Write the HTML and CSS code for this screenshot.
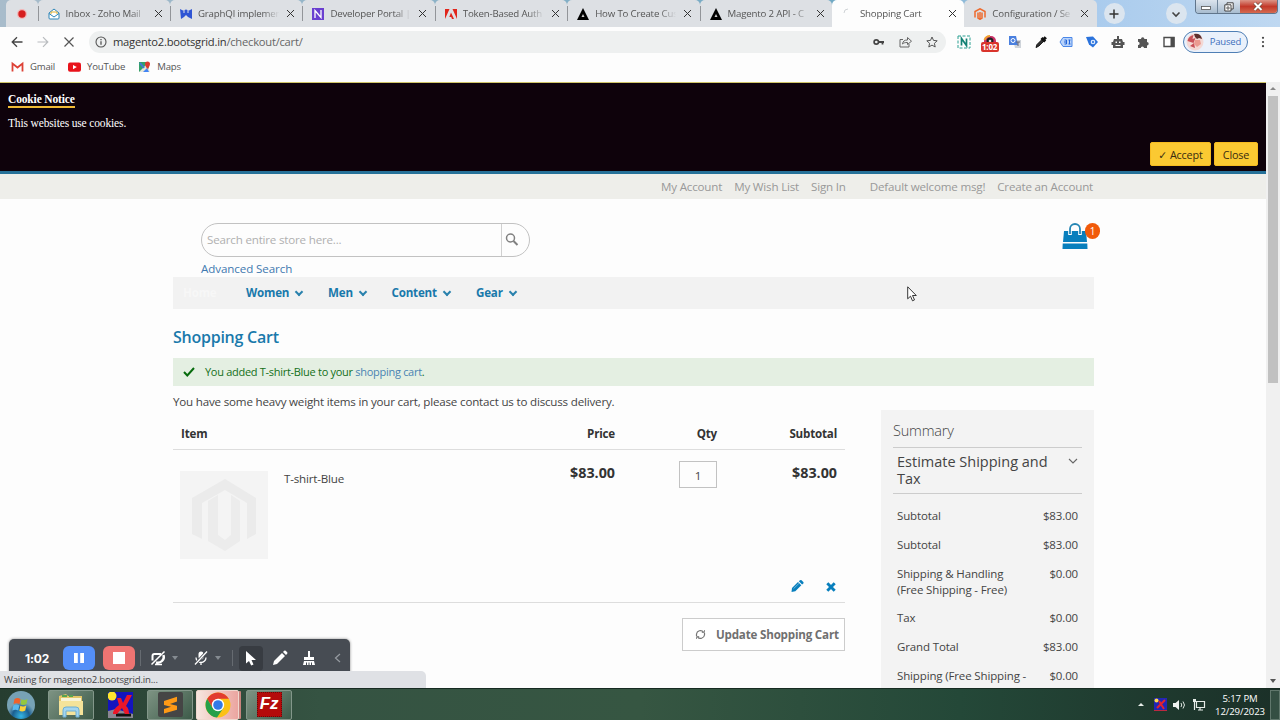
FILE: index.html
```html
<!DOCTYPE html>
<html lang="en">
<head>
    <meta charset="UTF-8">
    <title>Shopping Cart</title>
    <link rel="stylesheet" href="styles.css">
</head>
<body>
    <!-- Browser tabs -->
    <div class="tab-strip">
        <div class="tab pinned"><svg class="fav" viewBox="0 0 12 12"><circle cx="6" cy="6" r="5" fill="#f3b5b5"/><circle cx="6" cy="6" r="3.7" fill="#d61f1f"/></svg></div>
        <div class="tab">
            <svg class="fav" viewBox="0 0 12 12"><path d="M1 5l5-4 5 4v5a1 1 0 0 1-1 1H2a1 1 0 0 1-1-1z" fill="#fff" stroke="#2f86b8"/><path d="M3 6V4h6v2" fill="none" stroke="#e0b030"/><path d="M1 5.5l5 3.5 5-3.500" fill="none" stroke="#2f86b8"/></svg>
            <span class="tab-title">Inbox - Zoho Mail</span><span class="tab-close"></span>
        </div>
        <div class="tab">
            <svg class="fav" viewBox="0 0 12 12"><path d="M0 1l3 1.500 3-1 3 1 3-1.500v10L8 9 6 7 4 9l-3 2z" fill="#2f55d4"/><path d="M4 2v3M8 2v3M6 8v3" stroke="#dfe3e8"/></svg>
            <span class="tab-title">GraphQl implemen</span><span class="tab-close"></span>
        </div>
        <div class="tab">
            <svg class="fav" viewBox="0 0 12 12"><rect width="12" height="12" fill="#6a3fd0"/><path d="M3 10V2.500l6 7V2" fill="none" stroke="#fff" stroke-width="1.300"/></svg>
            <span class="tab-title">Developer Portal |</span><span class="tab-close"></span>
        </div>
        <div class="tab">
            <svg class="fav" viewBox="0 0 12 12"><path d="M0 1h4.500L0 11zM7.500 1H12v10zM6 4.500L9 11H7L6.200 9H4.300z" fill="#e1251b"/></svg>
            <span class="tab-title">Token-Based Auth</span><span class="tab-close"></span>
        </div>
        <div class="tab">
            <svg class="fav" viewBox="0 0 12 12"><path d="M6 0l6 12H0z" fill="#000"/><path d="M6 6l1.500 3h-3z" fill="#ccc"/></svg>
            <span class="tab-title">How To Create Cus</span><span class="tab-close"></span>
        </div>
        <div class="tab">
            <svg class="fav" viewBox="0 0 12 12"><path d="M6 0l6 12H0z" fill="#000"/><path d="M6 6l1.500 3h-3z" fill="#ccc"/></svg>
            <span class="tab-title">Magento 2 API - C</span><span class="tab-close"></span>
        </div>
        <div class="tab active">
            <svg class="fav" viewBox="0 0 12 12"><path d="M2 5a4 4 0 0 1 4-4" fill="none" stroke="#cfd3d6"/></svg>
            <span class="tab-title">Shopping Cart</span><span class="tab-close"></span>
        </div>
        <div class="tab last">
            <svg class="fav" viewBox="0 0 12 12"><path d="M1 9.500V3.500L6 .8l5 2.700v6M4 4.500V10l2 1.300L8 10V4.500M6 4v7" fill="none" stroke="#ee6a2c" stroke-width="1.500"/></svg>
            <span class="tab-title">Configuration / Se</span><span class="tab-close"></span>
        </div>
        <span class="strip-button"><svg width="12" height="12" viewBox="0 0 12 12"><path d="M6 1.500v9M1.500 6h9" stroke="#333" stroke-width="1.500"/></svg></span>
        <span class="strip-button search-tabs"><svg width="12" height="12" viewBox="0 0 12 12"><path d="M2.500 4.500L6 8l3.500-3.500" fill="none" stroke="#444" stroke-width="1.600"/></svg></span>
        <div class="window-buttons">
            <span class="win-min"><svg width="10" height="9" viewBox="0 0 10 9"><rect x=".5" y="4.500" width="9" height="3" fill="#fff" stroke="#555" stroke-width=".8"/></svg></span>
            <span class="win-max"><svg width="10" height="10" viewBox="0 0 10 10"><path d="M3 .8h6.200V7H3z" fill="#fff" stroke="#444"/><path d="M.8 2.800H7V9H.8z" fill="#fff" stroke="#444"/><path d="M3 5h2v2H3z" fill="none" stroke="#444" stroke-width=".8"/></svg></span>
            <span class="win-close"><svg width="10" height="9" viewBox="0 0 10 9"><path d="M1.500 1l7 7M8.500 1l-7 7" stroke="#643" stroke-width="3.200"/><path d="M1.500 1l7 7M8.500 1l-7 7" stroke="#fff" stroke-width="2.100"/></svg></span>
        </div>
    </div>

    <!-- Address bar and extensions -->
    <div class="toolbar">
        <svg class="nav-icon" viewBox="0 0 12 12"><path d="M11.500 6H1.300M6 1.200L1.200 6 6 10.800" fill="none" stroke="#444" stroke-width="1.300"/></svg>
        <svg class="nav-icon" viewBox="0 0 12 12"><path d="M.5 6h10.200M6 1.200L10.800 6 6 10.800" fill="none" stroke="#b9bcbf" stroke-width="1.200"/></svg>
        <svg class="nav-icon" viewBox="0 0 12 12"><path d="M1.500 1.500l9 9M10.500 1.500l-9 9" stroke="#555" stroke-width="1.200"/></svg>
        <div class="address">
            <svg width="12" height="12" viewBox="0 0 12 12"><circle cx="6" cy="6" r="5" fill="none" stroke="#555" stroke-width="1.100"/><path d="M6 5.200v3.600M6 3v1.200" stroke="#555" stroke-width="1.300"/></svg>
            <span class="url">magento2.bootsgrid.in<span>/checkout/cart/</span></span>
            <svg width="12" height="12" viewBox="0 0 12 12"><circle cx="3.300" cy="6" r="2.200" fill="none" stroke="#444" stroke-width="1.700"/><path d="M5.500 6H11M9.500 6v2.500" stroke="#444" stroke-width="1.800"/></svg>
            <svg width="13" height="12" viewBox="0 0 13 12"><path d="M4 3.500H1v7.500h9V8M3.500 8c.5-3 2-4 5-4V1.500l4 3.700-4 3.300V6.500c-2.500 0-3.800.3-5 1.500z" fill="none" stroke="#666"/></svg>
            <svg width="12" height="12" viewBox="0 0 12 12"><path d="M6 1l1.500 3.400 3.700.4-2.800 2.500.8 3.700L6 9.100 2.800 11l.8-3.700L.8 4.800l3.700-.4z" fill="none" stroke="#555"/></svg>
        </div>
        <div class="extensions">
            <svg viewBox="0 0 14 14"><rect x="1" y="1" width="12" height="12" fill="none" stroke="#2aa092" stroke-dasharray="3 1.500"/><path d="M4.500 10.500v-7l5 7v-7" fill="none" stroke="#128073" stroke-width="1.700"/></svg>
            <span class="rec-ext"><svg viewBox="0 0 14 14"><path d="M1 11V6a5 5 0 0 1 5-5h2a5 5 0 0 1 5 5v5z" fill="#cb3268"/><path d="M1.500 5Q3 1 7 1" fill="none" stroke="#f0a030" stroke-width="2"/><circle cx="7" cy="6" r="3.500" fill="#222"/><circle cx="7" cy="6" r="1.300" fill="#ddd"/></svg><span class="rec-time">1:02</span></span>
            <svg viewBox="0 0 14 14"><path d="M5 5h8v8H7z" fill="#cfd4da"/><path d="M1 1h7l2 9H1z" fill="#4a80df"/><circle cx="5" cy="5.500" r="2" fill="none" stroke="#fff"/><path d="M8 7h4M10 7v4" stroke="#667"/></svg>
            <svg viewBox="0 0 14 14"><path d="M2 12.500l1-3 5-5 1.700 1.700-5 5z" fill="#333" stroke="#111"/><path d="M7.500 3l3.700 3.500M9.500 4.800l2.300-2.600" stroke="#111" stroke-width="3"/></svg>
            <svg viewBox="0 0 14 14"><path d="M1 7l3-4.500h9v9H4z" fill="#b9d3fa" stroke="#4a87e8"/><path d="M5.500 5h2v4h-2M9.500 5h2M9.500 9h2M10.500 5v4M5 7h3" fill="none" stroke="#2264d8"/></svg>
            <svg viewBox="0 0 14 14"><path d="M1 2l7-.5L13 7l-5 5.500-4-3z" fill="#2b73dc"/><circle cx="8" cy="7" r="2.300" fill="#e8f1ff"/><path d="M8 5.600L9.300 7 8 8.400 6.700 7z" fill="#2b73dc"/></svg>
            <svg viewBox="0 0 14 14"><path d="M3 4h8l1 3h1.500v3H12v3H2v-3H.5V7H2z" fill="#555"/><path d="M7 1v3" stroke="#555" stroke-width="2"/><path d="M4.500 6.500h1.500v1.500H4.500zM8 6.500h1.500v1.500H8zM4.500 10h5v1h-5z" fill="#fff"/></svg>
            <svg viewBox="0 0 14 14"><path d="M2 4h3a1.700 1.700 0 1 1 3.400 0H11v3a1.700 1.700 0 1 1 0 3.400V13H8a1.600 1.600 0 0 0-3.200 0H2v-3a1.600 1.600 0 0 0 0-3.200z" fill="#555"/></svg>
            <svg viewBox="0 0 14 14"><path d="M2 2.500h10v9H2z" fill="#fff" stroke="#4c4c4c" stroke-width="1.400"/><path d="M8.500 2h4v10h-4z" fill="#4c4c4c"/></svg>
        </div>
        <div class="profile">
            <svg width="18" height="18" viewBox="0 0 18 18"><circle cx="9" cy="9" r="8.500" fill="#f3d8d4"/><path d="M1.500 8q1-5 6-6l-1 4 3-1-2 5-3-1zM4 13l4-3 1 5z" fill="#c95058"/><path d="M8 1q7-1 8 5l-3-1-2 1-2-2z" fill="#5e302e"/><path d="M9 7l5 0 1 4-4 3-3-3z" fill="#eb9a90"/></svg>
            <span>Paused</span>
        </div>
        <svg width="4" height="12" viewBox="0 0 4 12"><circle cx="2" cy="1.800" r="1.100" fill="#444"/><circle cx="2" cy="6" r="1.100" fill="#444"/><circle cx="2" cy="10.200" r="1.100" fill="#444"/></svg>
    </div>

    <!-- Bookmarks -->
    <div class="bookmarks">
        <span class="bookmark"><svg viewBox="0 0 13 12"><path d="M1.500 10.500V2.500l5 4 5-4v8" fill="none" stroke="#dd4136" stroke-width="1.800"/></svg>Gmail</span>
        <span class="bookmark"><svg viewBox="0 0 13 12"><rect y="1.500" width="13" height="9.200" rx="2" fill="#e8121a"/><path d="M5 4l3.800 2.100L5 8.200z" fill="#fff"/></svg>YouTube</span>
        <span class="bookmark"><svg viewBox="0 0 13 12"><path d="M1 1h10v10H1z" fill="#34a06a"/><path d="M1 11l8-8 3 8z" fill="#e7e6d8"/><path d="M5 11l4-4 2 4z" fill="#4285f4"/><path d="M2 2l4 5" stroke="#4279d8" stroke-width="2"/><path d="M7 3a2.500 2.500 0 0 1 5 0c0 2-2.500 5-2.500 5S7 5 7 3z" fill="#dc3a30"/></svg>Maps</span>
    </div>

    <div class="viewport">
        <div class="page">
            <div class="cookie-notice">
                <div class="cookie-text">
                    <h2>Cookie Notice</h2>
                    <p>This websites use cookies.</p>
                </div>
                <div class="cookie-actions">
                    <button class="accept" type="button">✓ Accept</button>
                    <button type="button">Close</button>
                </div>
            </div>

            <div class="header-panel">
                <a>My Account</a><a>My Wish List</a><a class="sign-in">Sign In</a><span>Default welcome msg!</span><a>Create an Account</a>
            </div>

            <div class="container">
                <div class="store-header">
                    <div>
                        <div class="search-box">
                            <span class="search-input">Search entire store here...</span>
                            <svg width="14" height="14" viewBox="0 0 14 14"><circle cx="5.500" cy="5" r="4" fill="none" stroke="#808080" stroke-width="1.500"/><path d="M8.500 8l4 4" stroke="#808080" stroke-width="2"/></svg>
                        </div>
                        <a class="advanced">Advanced Search</a>
                    </div>
                    <div class="minicart">
                        <svg width="26" height="27" viewBox="0 0 26 27"><path d="M2 8h22l1 11H1zM.7 20.500h24.600l.2 5.500H.5z" fill="#087fbd"/><path d="M8 12V6a5 5 0 0 1 10 0v6" fill="none" stroke="#fff" stroke-width="3.600"/><path d="M8 11V6a5 5 0 0 1 10 0v5" fill="none" stroke="#2686b4" stroke-width="1.800"/></svg>
                        <span class="count">1</span>
                    </div>
                </div>

                <nav class="main-nav">
                    <a class="home">Home</a>
                    <a class="women">Women<i class="caret"></i></a>
                    <a class="men">Men<i class="caret"></i></a>
                    <a class="content">Content<i class="caret"></i></a>
                    <a>Gear<i class="caret"></i></a>
                </nav>

                <h1>Shopping Cart</h1>

                <div class="message">
                    <svg width="12" height="10" viewBox="0 0 12 10"><path d="M1 5l3.300 3.500L11 1" fill="none" stroke="#066b0c" stroke-width="2"/></svg>
                    <span>You added T-shirt-Blue to your <a>shopping cart</a>.</span>
                </div>
                <p class="weight-note">You have some heavy weight items in your cart, please contact us to discuss delivery.</p>

                <div class="columns">
                    <!-- Cart items -->
                    <div class="cart">
                        <div class="row head">
                            <span>Item</span><span>Price</span><span>Qty</span><span>Subtotal</span>
                        </div>
                        <div class="row item">
                            <div class="product">
                                <svg class="thumb" viewBox="0 0 88 88"><path d="M12 63V27L45 8l31 19v36l-9 5V32L45 19 22 32v36z" fill="#ebebeb"/><path d="M28 30l10-6v40l7 5 6-5V24l9 6v40L45 80 28 70z" fill="#ececec"/></svg>
                                <span class="product-name">T-shirt-Blue</span>
                            </div>
                            <span class="price">$83.00</span>
                            <span class="qty">1</span>
                            <span class="price">$83.00</span>
                        </div>
                        <div class="item-actions">
                            <svg width="13" height="12" viewBox="0 0 13 12"><path d="M1 8l6-6 3.300 3.300-6 6L.5 12z" fill="#087fbd"/><path d="M7.800 1.300L9 .2q1-.4 1.600 0L12.300 2q.5.700 0 1.500l-1.200 1.100z" fill="#087fbd"/><path d="M2.500 8.700L8 3.300" stroke="#8cc4df" stroke-width=".8"/></svg>
                            <svg width="10" height="10" viewBox="0 0 10 10"><path d="M1.300 1.300l7.400 7.400M8.700 1.300L1.300 8.700" stroke="#087fbd" stroke-width="2.900"/></svg>
                        </div>
                        <div class="cart-footer">
                            <button class="update" type="button"><svg width="11" height="11" viewBox="0 0 11 11"><path d="M1.500 7V5a4 4 0 0 1 7-2M9.500 4v2a4 4 0 0 1-7 2" fill="none" stroke="#757575" stroke-width="1.200"/><path d="M6.800 3.500h2.700V1M4.200 7.500H1.500V10" fill="none" stroke="#757575" stroke-width=".8"/></svg>Update Shopping Cart</button>
                        </div>
                    </div>

                    <!-- Order summary -->
                    <div class="summary">
                        <h3>Summary</h3>
                        <div class="estimate">
                            <span>Estimate Shipping and Tax</span>
                            <svg width="10" height="6" viewBox="0 0 10 6"><path d="M1 1l4 4 4-4" fill="none" stroke="#666" stroke-width="1.100"/></svg>
                        </div>
                        <div class="total"><span>Subtotal</span><span>$83.00</span></div>
                        <div class="total"><span>Subtotal</span><span>$83.00</span></div>
                        <div class="total"><span>Shipping &amp; Handling<br>(Free Shipping - Free)</span><span>$0.00</span></div>
                        <div class="total"><span>Tax</span><span>$0.00</span></div>
                        <div class="total"><span>Grand Total</span><span>$83.00</span></div>
                        <div class="total"><span>Shipping (Free Shipping -</span><span>$0.00</span></div>
                    </div>
                </div>
            </div>
        </div>

        <div class="scrollbar">
            <i class="arrow-up"></i>
            <div class="thumb-bar"></div>
            <i class="arrow-down"></i>
        </div>

        <!-- Screen recorder controls -->
        <div class="recorder">
            <span class="rec-clock">1:02</span>
            <span class="pause"><svg width="12" height="12" viewBox="0 0 12 12"><path d="M1 1h3.800v10H1zM7.200 1H11v10H7.200z" fill="#fff"/></svg></span>
            <span class="stop"><svg width="12" height="12" viewBox="0 0 12 12"><path d="M0 0h12v12H0z" fill="#fff"/></svg></span>
            <span class="divider"></span>
            <svg width="16" height="16" viewBox="0 0 16 16"><path d="M2.500 10.500V6q0-2 2-2H11" fill="none" stroke="#fff" stroke-width="2"/><path d="M13.500 5a6 6 0 0 1-7.500 7.500" fill="none" stroke="#fff" stroke-width="2.400"/><path d="M14.500 1.500l-13 13M5 14.500h7" stroke="#fff" stroke-width="1.500"/></svg>
            <i class="drop"></i>
            <svg class="mic" width="16" height="16" viewBox="0 0 16 16"><rect x="5.500" y="1.500" width="5" height="8" rx="2.500" fill="#fff"/><path d="M3 7.500a5 5 0 0 0 10 0M8 12.500V15" fill="none" stroke="#fff" stroke-width="1.300"/><path d="M14 1.500l-12 13" stroke="#474c53" stroke-width="3"/><path d="M14 1.500l-12 13" stroke="#fff" stroke-width="1.300"/></svg>
            <i class="drop"></i>
            <span class="divider second"></span>
            <span class="pointer"><svg width="12" height="16" viewBox="0 0 12 16"><path d="M1 1v12.500l3-2.600L6.200 15.500l2.300-1L6.500 10H11z" fill="#fff"/></svg></span>
            <svg class="pen" width="16" height="16" viewBox="0 0 16 16"><path d="M1 15l1-4 8-8 3 3-8 8zM11 2l1.200-1.200q.8-.5 1.500 0l1.500 1.500q.5.700 0 1.500L14 5z" fill="#fff"/></svg>
            <svg class="broom" width="14" height="16" viewBox="0 0 14 16"><path d="M6 1h2v6h4v3H2V7h4z" fill="#fff"/><path d="M2 11h10l1 4H1z" fill="#fff"/><path d="M4.500 12.500V15M7 12.500V15M9.500 12.500V15" stroke="#474c53"/></svg>
            <svg width="7" height="10" viewBox="0 0 7 10"><path d="M6 1L1.500 5 6 9" fill="none" stroke="#969ba1" stroke-width="1.200"/></svg>
        </div>
        <div class="status-bubble">Waiting for magento2.bootsgrid.in...</div>
        <svg class="cursor" width="10" height="16" viewBox="0 0 10 16"><path d="M.7.8v12l2.800-2.600 2 4.600 2-.9-2-4.400h3.800z" fill="#fff" stroke="#222" stroke-width=".9"/></svg>
    </div>

    <!-- Windows taskbar -->
    <div class="taskbar">
        <span class="start"><svg width="30" height="30" viewBox="0 0 30 30"><defs><radialGradient id="orb" cx=".5" cy=".9"><stop offset="0" stop-color="#35b7e4"/><stop offset=".6" stop-color="#1b5f91"/><stop offset="1" stop-color="#77a2b5"/></radialGradient></defs><circle cx="15" cy="15" r="14" fill="url(#orb)"/><path d="M8.500 9q3-2 6 0l-1 5q-3-1.500-6 0z" fill="#f0622a"/><path d="M15.500 9.300q3 1.700 6-.3l-1 5q-3 2-6 .3z" fill="#94c83e"/><path d="M7.300 15.500q3-2 6 0l-1 5q-3-1.500-6 0z" fill="#58b8ed"/><path d="M14.300 15.800q3 1.700 6-.3l-1 5q-3 2-6 .3z" fill="#fbd13c"/></svg></span>
        <span class="task"><svg width="28" height="26" viewBox="0 0 28 26"><path d="M2 4l7-2 2 2h14v19H2z" fill="#e4c767"/><path d="M4 6h20v4H4z" fill="#f8f3d6"/><path d="M2 9h24v14H2z" fill="#f5e399"/><path d="M5 4h5M12 4h4" stroke="#58a450" stroke-width="2"/><path d="M6 25v-7q0-3 3-3h10q3 0 3 3v7h-3v-6H9v6z" fill="#a3d5ef" stroke="#6caed3"/></svg></span>
        <span class="task plain"><svg width="25" height="26" viewBox="0 0 25 26"><path d="M0 0h25v26H0z" fill="#1414bd"/><circle cx="4" cy="4" r="4.500" fill="#ffe52e"/><path d="M0 19l8-2 17 5v4H0z" fill="#8a8793"/><path d="M8 23h15" stroke="#111" stroke-width="3"/><path d="M9 6h4l2 5 4-8h5l-6 11q3 2 3 8h-4l-3-6-5 6H5q0-5 6-9z" fill="#eb1728"/></svg></span>
        <span class="task"><svg width="25" height="25" viewBox="0 0 25 25"><rect width="25" height="25" rx="2" fill="#454545"/><path d="M6 9l13-4.200v4.700L12 12l7 1.700v4L6 21.500V17l7-2.300L6 13z" fill="#ff9a16"/></svg></span>
        <span class="task running"><svg width="26" height="26" viewBox="0 0 26 26"><circle cx="13" cy="13" r="12.500" fill="#fbc116"/><path d="M2.200 6.800A12.500 12.500 0 0 1 23.800 6.800H13L7.600 16z" fill="#e23b2f"/><path d="M2.200 6.800A12.500 12.500 0 0 0 12 25.500L18.400 16H7.600z" fill="#25a04a"/><circle cx="13" cy="13" r="6.200" fill="#fff"/><circle cx="13" cy="13" r="4.800" fill="#3279e8"/></svg></span>
        <span class="task"><span class="filezilla">Fz</span></span>
        <div class="tray">
            <i class="tray-up"></i>
            <svg class="tray-app" width="13" height="13" viewBox="0 0 13 13"><path d="M0 0h13v13H0z" fill="#2226b5"/><circle cx="2.500" cy="2.500" r="2" fill="#ffd84a"/><path d="M5 3l5 8M11 2L3 10" stroke="#e3222e" stroke-width="2"/><path d="M0 12.500h13" stroke="#bc2940"/></svg>
            <svg class="tray-sound" width="13" height="12" viewBox="0 0 13 12"><path d="M0 4h2.500L6 1v10L2.500 8H0z" fill="#eef2f0"/><path d="M8 4q1.500 2 0 4M10 2.500q3 3.500 0 7" fill="none" stroke="#dce4df"/></svg>
            <svg class="tray-net" width="13" height="12" viewBox="0 0 13 12"><path d="M3.500 2.500h8v6h-8zM7 9v2M5 11h5M1.500 1v10" fill="none" stroke="#e6ece8" stroke-width="1.200"/><path d="M0 0h3v3H0z" fill="#e6ece8"/></svg>
            <div class="clock"><div>5:17 PM</div><div>12/29/2023</div></div>
            <span class="show-desktop"></span>
        </div>
    </div>
</body>
</html>
```
FILE: styles.css
```css
/* General Styling */
* {
    box-sizing: border-box;
}

body {
    margin: 0;
    width: 1280px;
    height: 720px;
    overflow: hidden;
    display: flex;
    flex-direction: column;
    font-family: 'Open Sans', sans-serif;
    font-size: 11.6px;
    letter-spacing: -0.19px;
    line-height: 16px;
    color: #444;
    background: #fdfdfd;
}

svg {
    display: block;
    flex: none;
}

h1, h2, h3, p {
    margin: 0;
}

button {
    font-family: inherit;
    letter-spacing: inherit;
}

/* Tab strip */
.tab-strip {
    flex: none;
    height: 27px;
    display: flex;
    align-items: center;
    padding-left: 6px;
    background: linear-gradient(90deg, #a8bccb, #71a9c4 65%, #a9cbed 85%, #bfd8f1);
}

.tab {
    width: 132.4px;
    height: 27px;
    display: flex;
    align-items: center;
    padding: 0 6px 0 10px;
    background: #dde0e4;
    border-radius: 5px 5px 0 0;
    font-size: 9.7px;
    color: #555;
    position: relative;
}

.tab::before {
    content: "";
    position: absolute;
    left: 0;
    top: 6px;
    height: 15px;
    border-left: 1px solid #929599;
}

.tab.pinned::before, .tab.active::before, .tab.last::before {
    display: none;
}

.tab.pinned {
    width: 31.6px;
}

.tab.active {
    background: #fdfdfd;
}

.fav {
    width: 12px;
    height: 12px;
}

.tab-title {
    width: 83px;
    margin-left: 6px;
    white-space: nowrap;
    -webkit-mask-image: linear-gradient(90deg, #000 78%, transparent 98%);
    mask-image: linear-gradient(90deg, #000 78%, transparent 98%);
}

.tab-close {
    width: 7px;
    height: 7px;
    margin-left: 6px;
    background: linear-gradient(45deg, transparent 44%, #333 45%, #333 55%, transparent 56%), linear-gradient(-45deg, transparent 44%, #333 45%, #333 55%, transparent 56%);
}

.strip-button {
    width: 21px;
    height: 21px;
    margin-left: 7px;
    border-radius: 50%;
    background: #dbe5ef;
    display: flex;
    align-items: center;
    justify-content: center;
}

.search-tabs {
    margin-left: 41px;
}

.window-buttons {
    display: flex;
    align-self: flex-start;
    margin-left: 8px;
    height: 14px;
    border: 1px solid #60758b;
    border-top: 0;
    border-radius: 0 0 4px 4px;
    overflow: hidden;
}

.window-buttons span {
    display: flex;
    align-items: center;
    justify-content: center;
    background: linear-gradient(#dce4ed, #a8bccf);
}

.win-min {
    width: 22px;
    border-right: 1px solid #71869b;
}

.win-max {
    width: 22px;
}

.window-buttons .win-close {
    width: 37px;
    background: linear-gradient(#dc9587, #c3392a 50%, #d56a50);
}

/* Toolbar */
.toolbar {
    flex: none;
    height: 29px;
    display: flex;
    align-items: center;
    padding: 0 15px 0 11px;
}

.nav-icon {
    width: 12px;
    height: 12px;
    margin-right: 14px;
}

.address {
    width: 857px;
    height: 22px;
    display: flex;
    align-items: center;
    gap: 14px;
    padding: 0 8px 0 6px;
    border-radius: 11px;
    background: #eef0f0;
}

.url {
    flex: 1;
    margin-left: -8px;
    font-size: 11.2px;
    letter-spacing: -0.24px;
    color: #333;
}

.url span {
    color: #666;
}

.extensions {
    display: flex;
    gap: 11.6px;
    margin-left: 11px;
}

.extensions svg {
    width: 14px;
    height: 14px;
}

.rec-ext {
    position: relative;
}

.rec-time {
    position: absolute;
    left: -2px;
    top: 7px;
    width: 18px;
    height: 10px;
    border-radius: 2px;
    background: #d9342b;
    color: #fff;
    font: bold 8px/10px 'Open Sans', sans-serif;
    text-align: center;
}

.profile {
    display: flex;
    align-items: center;
    gap: 6px;
    width: 65px;
    height: 22px;
    margin-left: 7px;
    margin-right: 13px;
    padding-left: 2px;
    border: 1px solid #4f7fb5;
    border-radius: 11px;
    background: #eaf1fb;
    color: #3d6dbb;
    font-size: 9.5px;
}

/* Bookmarks */
.bookmarks {
    flex: none;
    height: 26px;
    display: flex;
    align-items: center;
    gap: 13px;
    padding: 0 0 4px 11px;
    font-size: 9.6px;
    color: #555;
}

.bookmark {
    display: flex;
    align-items: center;
    gap: 6px;
}

.bookmark svg {
    width: 13px;
    height: 12px;
}

/* Page area */
.viewport {
    height: 606px;
    flex: none;
    display: flex;
    position: relative;
    overflow: hidden;
}

.page {
    flex: 1;
    height: 606px;
    overflow: hidden;
}

.cookie-notice {
    height: 92px;
    display: flex;
    justify-content: space-between;
    padding: 8px 8px 0;
    background: #0e020b;
    border-top: 1px solid #cfc467;
    border-bottom: 3px solid #267199;
    color: #fff;
    font-family: 'Liberation Serif', serif;
    font-size: 11.5px;
    letter-spacing: -0.15px;
}

.cookie-notice h2 {
    display: inline-block;
    font-size: 11.5px;
    line-height: 14px;
    border-bottom: 2px solid #f0bb35;
}

.cookie-notice p {
    margin-top: 7px;
    line-height: 16px;
}

.cookie-actions {
    display: flex;
    gap: 3px;
    padding-top: 51px;
}

.cookie-actions button {
    width: 44px;
    height: 24px;
    padding: 0;
    border: 1px solid #f6bb20;
    border-radius: 2px;
    background: #fbc932;
    color: #382c10;
    font: 10.8px 'Open Sans', 'DejaVu Sans', sans-serif;
}

.cookie-actions .accept {
    width: 61px;
}

.header-panel {
    height: 25px;
    display: flex;
    justify-content: flex-end;
    gap: 12px;
    padding: 5px 173px 0 0;
    background: #eeeeea;
    color: #999;
}

.sign-in {
    margin-right: 12px;
}

.container {
    width: 921px;
    margin-left: 173px;
}

.store-header {
    height: 78px;
    display: flex;
    justify-content: space-between;
    padding: 24px 0 0 28px;
}

.search-box {
    width: 329px;
    height: 34px;
    display: flex;
    align-items: center;
    border: 1px solid #c2c2c2;
    border-radius: 17px;
    margin-bottom: 4px;
}

.search-input {
    width: 300px;
    line-height: 32px;
    padding-left: 5px;
    margin-right: 3px;
    border-right: 1px solid #d0d0d0;
    color: #b0b0b0;
}

.advanced {
    color: #3f79b0;
    letter-spacing: -0.1px;
}

.minicart {
    position: relative;
    margin-right: 6px;
}

.count {
    position: absolute;
    left: 23px;
    top: 0;
    width: 15px;
    height: 16px;
    border-radius: 8px;
    background: #f15a0a;
    color: #fff;
    font-size: 10px;
    text-align: center;
}

/* Navigation */
.main-nav {
    height: 32px;
    display: flex;
    align-items: center;
    padding-left: 10px;
    background: #f2f2f2;
    font-weight: bold;
    color: #1979ab;
}

.main-nav a {
    display: flex;
    align-items: center;
}

.home {
    width: 63px;
    color: #f7f7f7;
}

.women {
    width: 82px;
}

.men {
    width: 63.5px;
}

.content {
    width: 84.5px;
}

.caret {
    width: 6px;
    height: 6px;
    margin: -3px 0 0 7px;
    border: solid #2a82ad;
    border-width: 0 2px 2px 0;
    transform: rotate(45deg);
}

h1 {
    font-size: 16px;
    font-weight: 600;
    letter-spacing: -0.25px;
    line-height: 24px;
    padding: 16px 0 9px;
    color: #1979ab;
}

.message {
    height: 28px;
    display: flex;
    align-items: center;
    gap: 10px;
    padding-left: 10px;
    background: #e4efe2;
    color: #147019;
    font-size: 11px;
    letter-spacing: -0.29px;
}

.message a {
    color: #4a83b2;
}

.weight-note {
    padding-top: 8px;
}

/* Cart */
.columns {
    display: flex;
    justify-content: space-between;
    align-items: flex-start;
}

.cart {
    width: 672px;
}

.row {
    display: grid;
    grid-template-columns: 342px 92px 102px 120px;
    padding: 0 8px;
}

.row > :not(:first-child) {
    justify-self: end;
}

.head {
    height: 40px;
    padding-top: 16px;
    font-weight: bold;
    color: #333;
    border-bottom: 1px solid #ddd;
}

.item {
    height: 110px;
    padding-top: 11px;
}

.product {
    display: flex;
}

.thumb {
    width: 88px;
    height: 88px;
    margin: 10px 16px 0 -1px;
    background: #f4f4f4;
}

.product-name {
    padding-top: 10px;
}

.price {
    font-size: 14.3px;
    letter-spacing: 0;
    font-weight: bold;
    line-height: 24px;
    color: #333;
}

.qty {
    width: 38px;
    height: 27px;
    border: 1px solid #c2c2c2;
    line-height: 27px;
    text-align: center;
}

.item-actions {
    height: 43px;
    display: flex;
    justify-content: flex-end;
    align-items: flex-end;
    gap: 22px;
    padding: 0 9px 10px;
    border-bottom: 1px solid #ddd;
}

.cart-footer {
    display: flex;
    justify-content: flex-end;
    padding-top: 15px;
}

.update {
    width: 163px;
    height: 33px;
    display: flex;
    align-items: center;
    gap: 10px;
    padding: 0 0 0 12px;
    white-space: nowrap;
    background: #fff;
    border: 1px solid #ccc;
    color: #707070;
    font-size: 11.6px;
    font-weight: bold;
}

/* Summary */
.summary {
    width: 213px;
    height: 290px;
    padding: 10px 12px 0;
    background: #f3f3f3;
}

.summary h3 {
    height: 27px;
    font-size: 14.5px;
    font-weight: 300;
    line-height: 21px;
}

.estimate {
    height: 47px;
    display: flex;
    justify-content: space-between;
    padding: 5px 4px 0;
    margin-bottom: 14px;
    border-top: 1px solid #ccc;
    border-bottom: 1px solid #ccc;
    font-size: 14.5px;
    letter-spacing: 0;
    line-height: 17px;
}

.estimate span {
    width: 155px;
}

.estimate svg {
    margin-top: 5px;
}

.total {
    display: flex;
    justify-content: space-between;
    padding: 0 4px;
    margin-bottom: 12.8px;
    font-size: 11.5px;
    letter-spacing: -0.14px;
}

/* Scrollbar */
.scrollbar {
    width: 14px;
    display: flex;
    flex-direction: column;
    align-items: center;
    padding: 5px 1px;
    background: #f0f0f0;
}

.arrow-up, .arrow-down, .tray-up, .drop {
    border: 3px solid transparent;
}

.arrow-up {
    border-top: 0;
    border-bottom: 3px solid #888;
}

.arrow-down {
    margin-top: auto;
    border-bottom: 0;
    border-top: 4px solid #555;
}

.thumb-bar {
    width: 10px;
    height: 287px;
    margin-top: 6px;
    background: #c1c1c1;
}

/* Screen recorder, floats over the page */
.recorder {
    position: absolute;
    left: 9px;
    top: 557px;
    width: 341px;
    height: 38px;
    display: flex;
    align-items: center;
    padding-left: 16px;
    background: #474c53;
    border-radius: 5px;
    box-shadow: 0 0 3px #888;
    color: #fff;
}

.rec-clock {
    width: 38px;
    font: bold 12px 'Inter', sans-serif;
}

.pause, .stop {
    width: 32px;
    height: 24px;
    display: flex;
    align-items: center;
    justify-content: center;
    border-radius: 6px;
    background: #548ff8;
}

.stop {
    margin-left: 8px;
    background: #ee7472;
}

.divider {
    height: 16px;
    margin: 0 9px 0 5px;
    border-left: 1px solid #666b71;
}

.drop {
    margin-left: 6px;
    border-bottom: 0;
    border-top: 4px solid #858b91;
}

.recorder .mic {
    margin-left: 15px;
}

.divider.second {
    margin: 0 6px 0 11px;
}

.pointer {
    width: 24px;
    height: 25px;
    display: flex;
    align-items: center;
    justify-content: center;
    background: #383c42;
    border-radius: 4px;
}

.pen {
    margin: 0 14px 0 9px;
}

.broom {
    margin-right: 18px;
}

.status-bubble {
    position: absolute;
    left: 0;
    top: 589px;
    width: 426px;
    height: 17px;
    padding-left: 4px;
    background: #dfe1e5;
    border-radius: 0 5px 0 0;
    font-size: 9.6px;
    line-height: 18px;
}

.cursor {
    position: absolute;
    left: 907px;
    top: 204px;
}

/* Taskbar */
.taskbar {
    height: 32px;
    flex: none;
    display: flex;
    align-items: center;
    gap: 3px;
    padding-left: 6px;
    border-top: 1px solid #172b22;
    background: linear-gradient(90deg, #263d30, #355342 25%, #365642 50%, #244838 75%, #1b3028);
}

.start {
    width: 39px;
}

.task {
    width: 46px;
    height: 30px;
    display: flex;
    align-items: center;
    justify-content: center;
    border: 1px solid #83978a;
    border-radius: 2px;
    background: linear-gradient(135deg, #7d9383, #3d5b49);
}

.task.plain {
    width: 47px;
    background: none;
    border-color: transparent;
}

.task.running {
    width: 43px;
    margin-right: 4px;
    background: linear-gradient(90deg, #f6e6df, #eba5a0);
    border-color: #efd7ce;
    box-shadow: 3px 0 0 -1px #c9837d;
}

.filezilla {
    width: 25px;
    height: 25px;
    background: #b40b0b;
    border: 1px dotted #6b0909;
    color: #fff;
    font: italic bold 17px/22px 'Liberation Sans', sans-serif;
    text-align: center;
}

.tray {
    display: flex;
    align-items: center;
    margin-left: auto;
    color: #fff;
}

.tray-up {
    border-top: 0;
    border-bottom: 3px solid #e8eeea;
}

.tray-app {
    margin-left: 10px;
}

.tray-sound {
    margin-left: 6px;
}

.tray-net {
    margin-left: 7px;
}

.clock {
    width: 50px;
    margin-left: 9px;
    font-size: 9.6px;
    letter-spacing: -0.1px;
    line-height: 13px;
    text-align: center;
}

.show-desktop {
    width: 10px;
    height: 30px;
    margin-left: 5px;
    border: 1px solid #60776c;
    background: #344f43;
}
```
